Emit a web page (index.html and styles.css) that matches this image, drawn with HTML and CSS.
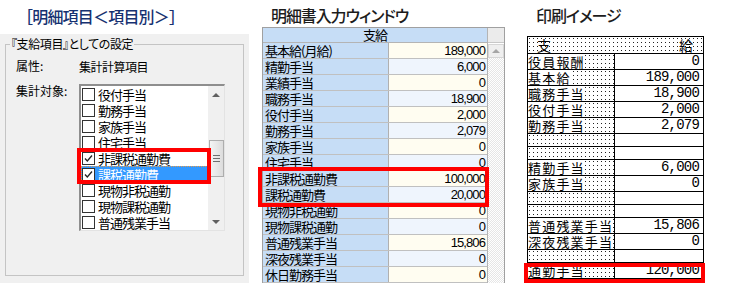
FILE: index.html
```html
<!DOCTYPE html>
<html lang="ja">
<head>
  <meta charset="UTF-8">
  <title>明細項目</title>
  <link rel="stylesheet" href="styles.css">
</head>
<body>
<div class="screen">

  <!-- 明細項目 -->
  <section class="col col-left">
    <h2 class="title title-left">［明細項目＜項目別＞］</h2>
    <div class="dialog">
      <fieldset class="groupbox">
        <legend>『支給項目』としての設定</legend>
        <div class="fields">
          <span class="field-label">属性:</span>
          <span class="field-value">集計計算項目</span>
          <span class="field-label">集計対象:</span>
          <div class="listbox">
            <ul class="items">
              <li><span class="chk"></span>役付手当</li>
              <li><span class="chk"></span>勤務手当</li>
              <li><span class="chk"></span>家族手当</li>
              <li><span class="chk"></span>住宅手当</li>
              <li><span class="chk"><svg viewBox="0 0 11 11"><polyline points="2,5.5 4.3,8 9,2.5"/></svg></span>非課税通勤費</li>
              <li class="selected"><span class="chk"><svg viewBox="0 0 11 11"><polyline points="2,5.5 4.3,8 9,2.5"/></svg></span>課税通勤費</li>
              <li><span class="chk"></span>現物非税通勤</li>
              <li><span class="chk"></span>現物課税通勤</li>
              <li><span class="chk"></span>普通残業手当</li>
            </ul>
            <div class="vscroll">
              <span class="arrow arrow-up"></span>
              <span class="thumb"><i></i><i></i><i></i></span>
              <span class="arrow arrow-down"></span>
            </div>
            <div class="mark mark-list"></div>
          </div>
        </div>
      </fieldset>
    </div>
  </section>

  <!-- 明細書入力ウィンドウ -->
  <section class="col col-mid">
    <h2 class="title title-mid">明細書入力ウィンドウ</h2>
    <div class="grid">
      <div class="grid-main">
        <div class="grid-head">支給</div>
        <div class="grid-row"><span class="g-label">基本給(月給)</span><span class="g-value">189,000</span></div>
        <div class="grid-row"><span class="g-label">精勤手当</span><span class="g-value">6,000</span></div>
        <div class="grid-row"><span class="g-label">業績手当</span><span class="g-value">0</span></div>
        <div class="grid-row"><span class="g-label">職務手当</span><span class="g-value">18,900</span></div>
        <div class="grid-row"><span class="g-label">役付手当</span><span class="g-value">2,000</span></div>
        <div class="grid-row"><span class="g-label">勤務手当</span><span class="g-value">2,079</span></div>
        <div class="grid-row"><span class="g-label">家族手当</span><span class="g-value">0</span></div>
        <div class="grid-row"><span class="g-label">住宅手当</span><span class="g-value">0</span></div>
        <div class="grid-row"><span class="g-label">非課税通勤費</span><span class="g-value">100,000</span></div>
        <div class="grid-row"><span class="g-label">課税通勤費</span><span class="g-value">20,000</span></div>
        <div class="grid-row"><span class="g-label">現物非税通勤</span><span class="g-value">0</span></div>
        <div class="grid-row"><span class="g-label">現物課税通勤</span><span class="g-value">0</span></div>
        <div class="grid-row"><span class="g-label">普通残業手当</span><span class="g-value">15,806</span></div>
        <div class="grid-row"><span class="g-label">深夜残業手当</span><span class="g-value">0</span></div>
        <div class="grid-row"><span class="g-label">休日勤務手当</span><span class="g-value">0</span></div>
      </div>
      <div class="grid-scroll">
        <div class="gs-head"></div>
        <div class="gs-btn"><span class="tri"></span></div>
        <div class="gs-track"></div>
      </div>
      <div class="mark mark-grid"></div>
    </div>
  </section>

  <!-- 印刷イメージ -->
  <section class="col col-right">
    <h2 class="title title-right">印刷イメージ</h2>
    <div class="print">
      <div class="p-head"><span>支</span><span>給</span></div>
      <div class="p-row"><span class="p-label"><b>役員報酬</b></span><span class="p-value">0</span></div>
      <div class="p-row"><span class="p-label"><b>基本給</b></span><span class="p-value">189,000</span></div>
      <div class="p-row"><span class="p-label"><b>職務手当</b></span><span class="p-value">18,900</span></div>
      <div class="p-row"><span class="p-label"><b>役付手当</b></span><span class="p-value">2,000</span></div>
      <div class="p-row"><span class="p-label"><b>勤務手当</b></span><span class="p-value">2,079</span></div>
      <div class="p-row blank"><span class="p-label"></span><span class="p-value"></span></div>
      <div class="p-row blank"><span class="p-label"></span><span class="p-value"></span></div>
      <div class="p-row"><span class="p-label"><b>精勤手当</b></span><span class="p-value">6,000</span></div>
      <div class="p-row"><span class="p-label"><b>家族手当</b></span><span class="p-value">0</span></div>
      <div class="p-row blank"><span class="p-label"></span><span class="p-value"></span></div>
      <div class="p-row blank"><span class="p-label"></span><span class="p-value"></span></div>
      <div class="p-row"><span class="p-label"><b>普通残業手当</b></span><span class="p-value">15,806</span></div>
      <div class="p-row"><span class="p-label"><b>深夜残業手当</b></span><span class="p-value">0</span></div>
      <div class="p-row blank"><span class="p-label"></span><span class="p-value"></span></div>
      <div class="p-row"><span class="p-label"><b>通勤手当</b></span><span class="p-value">120,000</span></div>
      <div class="mark mark-print"></div>
    </div>
  </section>

</div>
</body>
</html>
```

FILE: styles.css
```css
* {
  box-sizing: border-box;
}
body {
  margin: 0;
  background: #fff;
  color: #000;
  font-family: "Noto Sans CJK JP", "Liberation Sans", sans-serif;
}
.screen {
  display: flex;
  width: 734px;
  height: 283px;
  overflow: hidden;
}
.col {
  display: flex;
  flex-direction: column;
  flex-shrink: 0;
}

/* titoli */
.title {
  margin: 0;
  font-size: 16px;
  line-height: 20px;
  font-weight: 500;
  white-space: nowrap;
  color: #1c1c1c;
}
.title-left {
  height: 34px;
  padding: 6px 0 0 17px;
  color: #173171;
  letter-spacing: -0.8px;
}
.title-mid,
.title-right {
  height: 36px;
  padding: 5px 0 0 9px;
  font-feature-settings: "palt";
  letter-spacing: -1.1px;
}

/* pannello sinistro */
.col-left {
  width: 249px;
}
.dialog {
  flex: 1;
  background: #f0f0f0;
  padding: 3px 5px 0 5px;
}
.groupbox {
  margin: 0;
  height: 239px;
  min-width: 0;
  padding: 0 0 0 4px;
  border: 1px solid #c4c4c4;
}
.groupbox legend {
  padding: 0 1px;
  font-size: 12px;
  line-height: 14px;
  font-feature-settings: "palt";
  letter-spacing: -0.4px;
}
.fields {
  display: grid;
  grid-template-columns: 63px 146px;
  grid-template-rows: 16px auto;
  row-gap: 9px;
  margin: 8px 0 0 6px;
  font-size: 12px;
  line-height: 16px;
}
.field-label {
  margin-top: -1px;
}
.field-value {
  letter-spacing: -0.5px;
}
.listbox {
  position: relative;
  display: flex;
  height: 147px;
  background: #fff;
  border-top: 2px solid #8e8e8e;
  border-left: 2px solid #8e8e8e;
  border-right: 1px solid #e3e3e3;
  border-bottom: 1px solid #e3e3e3;
}
.items {
  list-style: none;
  margin: 0;
  padding: 0;
  width: 127px;
  overflow: hidden;
  font-size: 13px;
  letter-spacing: -1px;
}
.items li {
  display: flex;
  align-items: center;
  height: 16px;
  white-space: nowrap;
  line-height: 15px;
}
.chk {
  display: inline-flex;
  width: 13px;
  height: 13px;
  margin: 0 3px 0 1px;
  background: #fff;
  border: 1px solid #333;
}
.chk svg {
  width: 11px;
  height: 11px;
  fill: none;
  stroke: #222;
  stroke-width: 1.3;
}
.items li.selected {
  background: #3399ff;
  color: #fff;
  outline: 1px dotted #e39a4c;
  outline-offset: -1px;
}
.vscroll {
  display: flex;
  flex-direction: column;
  align-items: center;
  width: 16px;
  background: #f0f0f0;
  padding: 7px 0 6px 0;
}
.arrow {
  width: 0;
  height: 0;
  border-left: 4px solid transparent;
  border-right: 4px solid transparent;
}
.arrow-up {
  border-bottom: 4px solid #606060;
}
.arrow-down {
  margin-top: auto;
  border-top: 4px solid #606060;
}
.thumb {
  display: flex;
  flex-direction: column;
  align-items: center;
  justify-content: center;
  gap: 2px;
  width: 15px;
  height: 37px;
  margin-top: 43px;
  border: 1px solid #adadad;
  background: linear-gradient(to right, #f4f4f4, #dcdcdc);
}
.thumb i {
  display: block;
  width: 7px;
  height: 1px;
  background: #6e6e6e;
}

/* griglia centrale */
.col-mid {
  width: 256px;
  padding-left: 13px;
}
.grid {
  position: relative;
  display: flex;
  width: 243px;
  flex: 1;
  border: 1px solid #a0a0a0;
  border-bottom: none;
}
.grid-main {
  width: 225px;
  border-right: 1px solid #b4b4b4;
  font-size: 13px;
  letter-spacing: -1px;
}
.grid-head {
  height: 15px;
  line-height: 14px;
  text-align: center;
  background: #c6ddf6;
  border-bottom: 1px solid #b4b4b4;
}
.grid-row {
  display: flex;
  height: 16px;
  line-height: 15px;
  border-bottom: 1px solid #c0c0c0;
}
.g-label {
  width: 126px;
  padding-left: 2px;
  background: #c6ddf6;
  border-right: 1px solid #b0b0b0;
  white-space: nowrap;
}
.g-value {
  flex: 1;
  padding-right: 2px;
  text-align: right;
  font-family: "Liberation Sans", sans-serif;
  letter-spacing: -0.9px;
  background: #fffdf1;
}
.grid-row:nth-child(odd) .g-value {
  background: #eff5fd;
}
.grid-scroll {
  width: 16px;
  display: flex;
  flex-direction: column;
}
.gs-head {
  height: 15px;
  background: #ebebeb;
  border-bottom: 1px solid #c8c8c8;
}
.gs-btn {
  display: flex;
  align-items: center;
  justify-content: center;
  height: 14px;
  margin-top: 1px;
  background: #efefef;
  border: 1px solid #d6d6d6;
}
.tri {
  width: 0;
  height: 0;
  border-left: 4px solid transparent;
  border-right: 4px solid transparent;
  border-bottom: 4px solid #a6a6a6;
}
.gs-track {
  flex: 1;
  background: repeating-conic-gradient(#e6e6e6 0 25%, #fff 0 50%) 0 0 / 2px 2px;
}

/* anteprima di stampa */
.col-right {
  width: 177px;
  margin-left: 22px;
}
.print {
  position: relative;
  border: 1px solid #000;
  border-bottom: none;
  font-size: 13px;
}
/* puntini: nero solo dove le due righe trasparenti si incrociano */
.p-head,
.p-label {
  background:
    linear-gradient(to right, transparent 1px, #fff 1px) 1px 1px / 4px 4px,
    linear-gradient(to bottom, transparent 1px, #fff 1px) 1px 1px / 4px 4px,
    #222;
}
.p-head {
  display: flex;
  justify-content: space-between;
  height: 17px;
  padding: 0 10px 0 9px;
  line-height: 16px;
  font-size: 14px;
  border-bottom: 1px solid #000;
}
.p-row {
  display: flex;
  height: 16px;
  line-height: 15px;
  border-bottom: 1px solid #000;
}
.p-row.blank {
  height: 13px;
}
.p-label {
  width: 87px;
  border-right: 1px solid #000;
  white-space: nowrap;
}
.p-label b {
  display: inline-block;
  height: 15px;
  font-weight: normal;
  letter-spacing: 1.2px;
  background: #fff;
}
.p-value {
  flex: 1;
  padding-right: 4px;
  text-align: right;
  background: #fff;
  font-family: "Liberation Mono", monospace;
  font-size: 14px;
  letter-spacing: -0.8px;
}

/* riquadri rossi */
.mark {
  position: absolute;
  border: 4px solid #ff0000;
}
.mark-list {
  left: -4px;
  top: 62px;
  width: 134px;
  height: 36px;
}
.mark-grid {
  left: -5px;
  top: 139px;
  width: 231px;
  height: 40px;
}
.mark-print {
  left: -4px;
  top: 226px;
  width: 181px;
  height: 20px;
}
```
